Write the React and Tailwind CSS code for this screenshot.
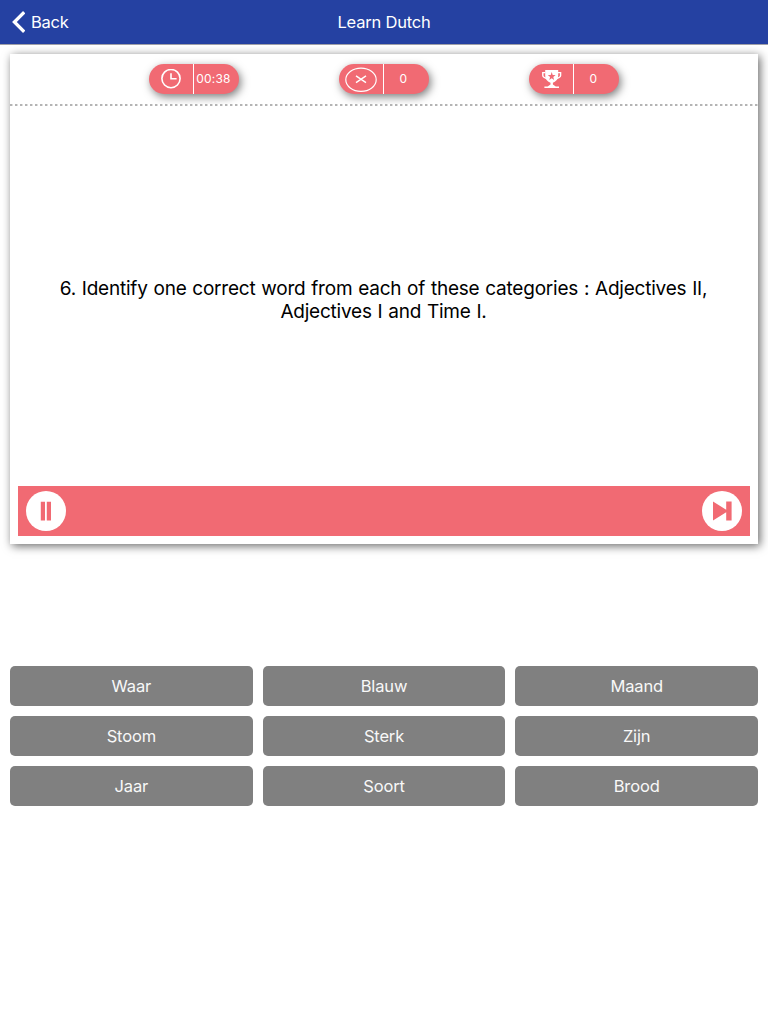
import React from "react";

const words = ["Waar", "Blauw", "Maand", "Stoom", "Sterk", "Zijn", "Jaar", "Soort", "Brood"];

function ClockIcon() {
  return (
    <svg width="20" height="20" viewBox="0 0 20 20" fill="none" stroke="white" strokeWidth="1.6">
      <circle cx="10" cy="9.6" r="9.1" />
      <path d="M10 4.2V9.7H15.6" />
    </svg>
  );
}

function WrongIcon() {
  return (
    <svg width="32" height="26" viewBox="0 0 32 26" fill="none" stroke="white">
      <ellipse cx="16" cy="13.8" rx="15.2" ry="11.6" strokeWidth="1.2" />
      <path d="M11 9.8L21 16.6M21 9.8L11 16.6" strokeWidth="1.4" />
    </svg>
  );
}

function TrophyIcon() {
  return (
    <svg width="20" height="20" viewBox="0 0 20 20" className="ml-px">
      <path d="M3.4 3.6H0.8V6.6C0.8 8.4 3 9.2 6 10M16 3.6H18.6V6.6C18.6 8.4 16.4 9.2 13.4 10" fill="none" stroke="white" strokeWidth="1.4" />
      <path d="M3.2 1H16.2V6.5C16.2 10.3 13.6 12.9 10.9 13.7V15.6L13.8 17.4H17V19H2.4V17.4H5.6L8.5 15.6V13.7C5.8 12.9 3.2 10.3 3.2 6.5Z" fill="white" />
      <path d="M9.7 3L10.7 6L13.6 6.1L11.3 8L12.1 10.9L9.7 9.2L7.3 10.9L8.1 8L5.8 6.1L8.7 6Z" fill="#f26b75" />
    </svg>
  );
}

function Stat({ icon, children }) {
  return (
    <div className="flex h-[30px] w-[90px] rounded-full bg-[#f16a73] text-[12px] text-white shadow-[2px_3px_8px_rgba(0,0,0,0.5)]">
      <div className="flex w-11 items-center justify-center">{icon}</div>
      <div className="w-px bg-white" />
      <div className="flex flex-1 items-center justify-center pr-[6px] tracking-[0.2px]">{children}</div>
    </div>
  );
}

export default function App() {
  return (
    <div className="flex h-[1024px] w-full flex-col bg-white font-['Inter',sans-serif]">
      <header className="grid h-[45px] shrink-0 grid-cols-3 items-center border-b border-[#a0a0a8] bg-[#2541a2] text-[16.5px] text-white">
        <button className="flex items-center gap-[6px] pl-3 tracking-[-0.25px]">
          <svg width="13" height="22" viewBox="0 0 13 22" fill="none" stroke="white" strokeWidth="3.3">
            <path d="M12.2 1.2L2.4 11L12.2 20.8" />
          </svg>
          <span>Back</span>
        </button>
        <h1 className="text-center tracking-[-0.2px]">Learn Dutch</h1>
      </header>

      <main className="mx-[10px] mt-[9px] flex h-[490px] shrink-0 flex-col bg-white shadow-[2px_2px_9px_rgba(0,0,0,0.6)]">
        <div className="flex h-[50px] justify-center gap-[100px] pt-[10px]">
          <Stat icon={<ClockIcon />}>00:38</Stat>
          <Stat icon={<WrongIcon />}>0</Stat>
          <Stat icon={<TrophyIcon />}>0</Stat>
        </div>
        <div className="h-[2px] bg-[repeating-linear-gradient(90deg,#b4b4b4_0_2px,#dedede_2px_3px,#ffffff_3px_5px)]" />
        <div className="flex flex-1 items-center justify-center pt-[7px] pr-px text-center text-[19px] leading-[23px] tracking-[-0.22px] [word-spacing:0.7px] text-black">
          <p>
            6. Identify one correct word from each of these categories : Adjectives II,
            <br />
            Adjectives I and Time I.
          </p>
        </div>
        <div className="mx-2 mb-2 flex h-[50px] items-center justify-between bg-[#f16a73] px-2">
          <button aria-label="Pause" className="flex size-10 items-center justify-center rounded-full bg-white">
            <svg width="12" height="20" viewBox="0 0 12 20" fill="#f16a73">
              <path d="M.8.8h4.2v18.6H.8zM6.8.8h4.2v18.6H6.8z" />
            </svg>
          </button>
          <button aria-label="Next" className="flex size-10 items-center justify-center rounded-full bg-white">
            <svg width="20" height="20" viewBox="0 0 20 20" fill="#f16a73">
              <path d="M1 .5L14.2 8.8V.5H19.6V19.5H14.2V11.2L1 19.5Z" />
            </svg>
          </button>
        </div>
      </main>

      <section className="mx-[10px] mt-[122px] grid grid-cols-3 gap-[10px]">
        {words.map((word) => (
          <button key={word} className="h-10 rounded-[5px] bg-[#808080] text-[16.5px] tracking-[-0.15px] text-[#f8f8f8]">
            {word}
          </button>
        ))}
      </section>
    </div>
  );
}
